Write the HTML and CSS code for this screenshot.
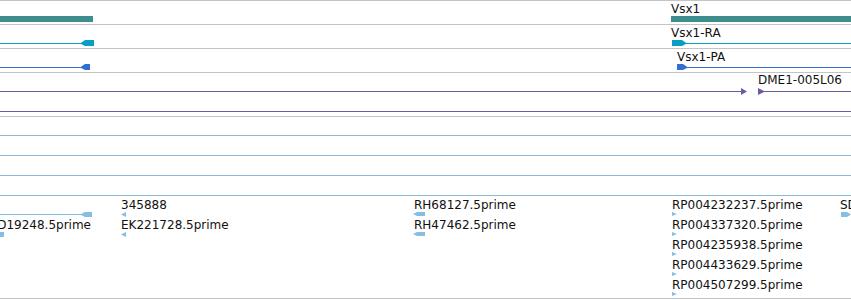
FILE: index.html
```html
<!DOCTYPE html>
<html lang="en">
<head>
  <meta charset="UTF-8" />
  <title>Vsx1 region</title>
  <link rel="stylesheet" href="styles.css">
</head>
<body>
  <div class="browser">

    <div class="track track-23">
      <svg width="851" height="23">
        <text class="label" x="671" y="12">Vsx1</text>
        <rect class="gene" x="0" y="15" width="93" height="6"/>
        <rect class="gene" x="671" y="15" width="180" height="6"/>
      </svg>
    </div>

    <div class="track track-23">
      <svg width="851" height="23">
        <text class="label" x="671" y="12">Vsx1-RA</text>
        <rect class="mrna" x="0" y="18" width="82" height="1"/>
        <polygon class="mrna" points="80,18.5 85,15 94,15 94,21 85,21"/>
        <polygon class="mrna" points="672,15 682,15 687,18.5 682,21 672,21"/>
        <rect class="mrna" x="684" y="18" width="167" height="1"/>
      </svg>
    </div>

    <div class="track track-23">
      <svg width="851" height="23">
        <text class="label" x="677" y="12">Vsx1-PA</text>
        <rect class="cds" x="0" y="18" width="82" height="1"/>
        <polygon class="cds" points="80,18.5 85,15 90,15 90,21 85,21"/>
        <polygon class="cds" points="677,15 683,15 688,18.5 683,21 677,21"/>
        <rect class="cds" x="685" y="18" width="166" height="1"/>
      </svg>
    </div>

    <div class="track track-43">
      <svg width="851" height="43">
        <text class="label" x="758" y="11">DME1-005L06</text>
        <rect class="clone" x="0" y="18" width="741" height="1"/>
        <polygon class="clone" points="741,15 747,18.5 741,22"/>
        <polygon class="clone" points="758,15 765,18.5 758,22"/>
        <rect class="clone" x="758" y="18" width="93" height="1"/>
        <rect class="clone" x="0" y="38" width="851" height="1"/>
      </svg>
    </div>

    <div class="track track-18 est-row"></div>
    <div class="track track-19 est-row"></div>
    <div class="track track-19 est-row"></div>
    <div class="track track-19 est-row"></div>

    <div class="track track-102">
      <svg width="851" height="102">
        <rect class="est" x="0" y="18" width="82" height="1"/>
        <polygon class="est" points="80,18.5 85,16 92,16 92,21 85,21"/>
        <text class="label" x="91" y="33" text-anchor="end">D19248.5prime</text>
        <rect class="est" x="0" y="36" width="4" height="5"/>

        <text class="label" x="121" y="13">345888</text>
        <polygon class="est" points="121,18.5 126,16 126,21"/>
        <text class="label" x="121" y="33">EK221728.5prime</text>
        <polygon class="est" points="121,38.5 126,36 126,41"/>

        <text class="label" x="414" y="13">RH68127.5prime</text>
        <polygon class="est" points="413,18 417,16 425,16 425,20 417,20"/>
        <text class="label" x="414" y="33">RH47462.5prime</text>
        <polygon class="est" points="413,38 417,36 425,36 425,40 417,40"/>

        <text class="label" x="672" y="13">RP004232237.5prime</text>
        <polygon class="est" points="672,16 677,18 672,20"/>
        <text class="label" x="672" y="33">RP004337320.5prime</text>
        <polygon class="est" points="672,36 677,38 672,40"/>
        <text class="label" x="672" y="53">RP004235938.5prime</text>
        <polygon class="est" points="672,56 677,58 672,60"/>
        <text class="label" x="672" y="73">RP004433629.5prime</text>
        <polygon class="est" points="672,76 677,78 672,80"/>
        <text class="label" x="672" y="93">RP004507299.5prime</text>
        <polygon class="est" points="672,96 677,98 672,100"/>

        <text class="label" x="840" y="13">SD</text>
        <polygon class="est" points="841,16 847,16 851,18.5 847,21 841,21"/>
      </svg>
    </div>

  </div>
</body>
</html>
```

FILE: styles.css
```css
* {
  margin: 0;
  padding: 0;
  box-sizing: content-box;
}
body, html {
  background: white;
  font-family: "DejaVu Sans", sans-serif;
  font-size: 12px;
  color: #111;
  overflow: hidden;
}
.browser {
  width: 851px;
  border-top: 1px solid #c4c4c4;
}
.track {
  border-bottom: 1px solid #c4c4c4;
  overflow: hidden;
}
.track svg {
  display: block;
}
.track-18 { height: 18px; }
.track-19 { height: 19px; }
.track-23 { height: 23px; }
.track-43 { height: 43px; }
.track-102 { height: 102px; }
.track-43,
.est-row {
  border-bottom-color: #c4c4c4;
}
.est-row {
  border-bottom-color: #8cb8dc;
}
.label {
  font-family: "DejaVu Sans", sans-serif;
  font-size: 12px;
  fill: #111;
}
.gene { fill: #3f8e8e; }
.mrna { fill: #0a9ec4; }
.cds { fill: #356ed2; }
.clone { fill: #6b5ba3; }
.est { fill: #86bde3; }
```
